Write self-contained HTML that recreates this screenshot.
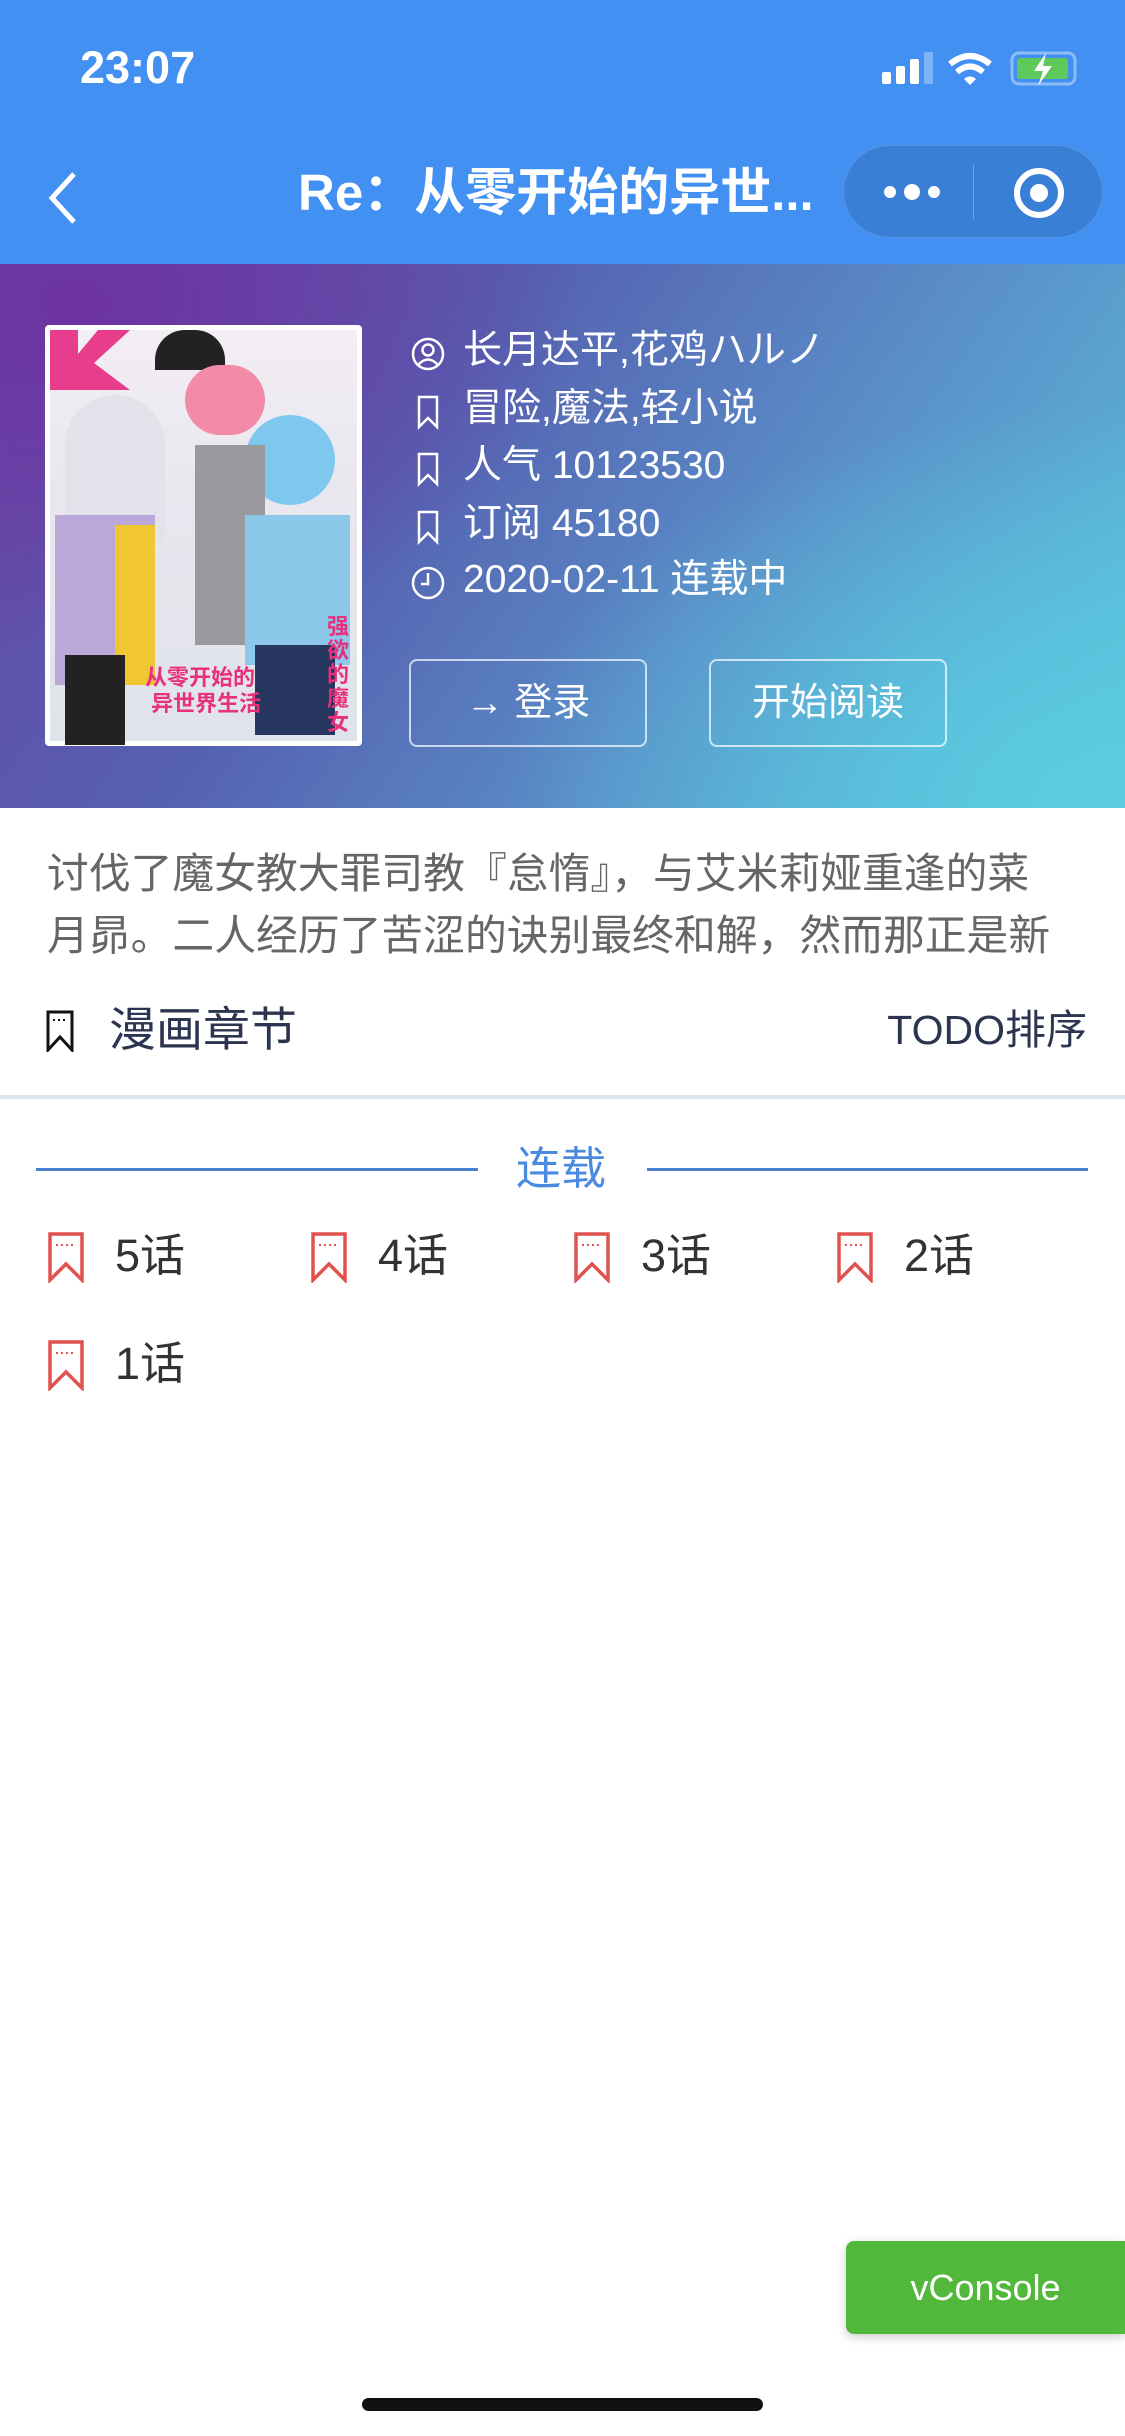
<!DOCTYPE html>
<html><head><meta charset="utf-8"><style>
*{margin:0;padding:0;box-sizing:border-box}
body{width:1125px;height:2436px;background:#fff;position:relative;overflow:hidden;font-family:"Liberation Sans","Noto Sans CJK SC",sans-serif}
.abs{position:absolute}
.hdr{left:0;top:0;width:1125px;height:264px;background:#4290f2}
.grad{left:0;top:264px;width:1125px;height:544px;background:
radial-gradient(ellipse 500px 350px at 80px 40px,rgba(110,50,160,.95),rgba(110,50,160,0) 100%),
radial-gradient(ellipse 600px 400px at 1100px 540px,rgba(90,205,225,1),rgba(90,205,225,0) 100%),
linear-gradient(125deg,#6a44a6 0%,#5560b0 35%,#5a8ec8 65%,#5cc4dc 100%)}
.info{left:410px;color:#fff;font-size:39px;line-height:46px;white-space:nowrap}
.info svg{position:absolute;left:0;top:8px}
.info span{position:absolute;left:53px;top:0}
.btn{top:659px;height:88px;width:238px;border:2px solid rgba(255,255,255,.7);border-radius:8px;color:#fff;font-size:38px;text-align:center;line-height:84px}
.ch{font-size:45px;color:#333;line-height:56px;white-space:nowrap}
.ch svg{position:absolute;left:0;top:3px}
.ch span{position:absolute;left:68px;top:0}
</style></head><body>
<div class="abs hdr"></div>
<div class="abs" style="left:80px;top:42px;color:#fff;font-size:45px;font-weight:bold;line-height:52px">23:07</div>
<svg class="abs" style="left:880px;top:50px" width="200" height="40" viewBox="0 0 200 40">
<rect x="2" y="22" width="9" height="12" rx="2" fill="#fff"/><rect x="16" y="16" width="9" height="18" rx="2" fill="#fff"/><rect x="30" y="9" width="9" height="25" rx="2" fill="#fff"/><rect x="44" y="2" width="9" height="32" rx="2" fill="#7fb4f6"/>
<path d="M70 14 Q90 -2 110 14" stroke="#fff" stroke-width="6" fill="none"/><path d="M77 22 Q90 11 103 22" stroke="#fff" stroke-width="6" fill="none"/><path d="M84 29 L90 35 L96 29 Q90 24 84 29Z" fill="#fff"/>
<rect x="132" y="3" width="63" height="31" rx="7" fill="none" stroke="#8dbdf5" stroke-width="3"/><rect x="137" y="8" width="51" height="21" rx="3" fill="#5ec85a"/><path d="M166 3 L154 21 L163 21 L158 36 L172 16 L163 16 Z" fill="#fff"/>
</svg>
<svg class="abs" style="left:44px;top:170px" width="40" height="56" viewBox="0 0 40 56"><path d="M30 4 L8 28 L30 52" stroke="#fff" stroke-width="5" fill="none"/></svg>
<div class="abs" style="left:298px;top:163px;color:#fff;font-size:51px;font-weight:bold;line-height:60px;white-space:nowrap">Re：从零开始的异世...</div>
<div class="abs" style="left:843px;top:145px;width:260px;height:93px;border-radius:47px;background:#3a7fd6;border:1px solid #5495e6"></div>
<div class="abs" style="left:973px;top:164px;width:1px;height:56px;background:#6aa1e6"></div>
<svg class="abs" style="left:880px;top:175px" width="70" height="34"><circle cx="10" cy="17" r="6" fill="#fff"/><circle cx="32" cy="17" r="8" fill="#fff"/><circle cx="54" cy="17" r="6" fill="#fff"/></svg>
<svg class="abs" style="left:1012px;top:166px" width="54" height="54"><circle cx="27" cy="27" r="22" stroke="#fff" stroke-width="6" fill="none"/><circle cx="27" cy="27" r="9" fill="#fff"/></svg>

<div class="abs grad"></div>
<div class="abs" style="left:45px;top:325px;width:317px;height:421px;background:#fff;border-radius:4px;overflow:hidden">
<div class="abs" style="left:5px;top:5px;width:307px;height:411px;background:linear-gradient(180deg,#f3eef4 0%,#e9e6ee 40%,#dfe3ea 100%)"></div>
<div class="abs" style="left:5px;top:5px;width:80px;height:60px;background:#e83c8c;clip-path:polygon(0 0,35% 0,35% 40%,60% 0,100% 0,55% 55%,100% 100%,0 100%)"></div>
<div class="abs" style="left:110px;top:5px;width:70px;height:40px;background:#222;border-radius:30px 30px 0 0"></div>
<div class="abs" style="left:140px;top:40px;width:80px;height:70px;background:#f28aa8;border-radius:40px"></div>
<div class="abs" style="left:200px;top:90px;width:90px;height:90px;background:#7ec8ee;border-radius:45px"></div>
<div class="abs" style="left:20px;top:70px;width:100px;height:150px;background:#e2e2ea;border-radius:50px 50px 10px 10px"></div>
<div class="abs" style="left:10px;top:190px;width:100px;height:170px;background:#b9a8d8"></div>
<div class="abs" style="left:70px;top:200px;width:40px;height:160px;background:#f0c632"></div>
<div class="abs" style="left:150px;top:120px;width:70px;height:200px;background:#9a9a9e"></div>
<div class="abs" style="left:200px;top:190px;width:105px;height:150px;background:#8cc8ea"></div>
<div class="abs" style="left:210px;top:320px;width:80px;height:90px;background:#26365e"></div>
<div class="abs" style="left:20px;top:330px;width:60px;height:90px;background:#222"></div>
<div class="abs" style="left:100px;top:340px;width:120px;height:60px;color:#e8307c;font-size:22px;font-weight:bold;line-height:26px;white-space:nowrap">从零开始的<br>&nbsp;异世界生活</div>
<div class="abs" style="left:282px;top:290px;width:26px;color:#e8307c;font-size:22px;font-weight:bold;line-height:24px">强欲的魔女</div>
</div>

<div class="abs info" style="top:328px"><svg width="36" height="36" viewBox="0 0 36 36"><circle cx="18" cy="18" r="15" stroke="#fff" stroke-width="2.5" fill="none"/><circle cx="18" cy="14" r="5.5" stroke="#fff" stroke-width="2.5" fill="none"/><path d="M8 29 Q18 18 28 29" stroke="#fff" stroke-width="2.5" fill="none"/></svg><span>长月达平,花鸡ハルノ</span></div>
<div class="abs info" style="top:386px"><svg width="36" height="36" viewBox="0 0 36 36"><path d="M9 3 H27 V33 L18 24 L9 33 Z" stroke="#fff" stroke-width="2.5" fill="none"/></svg><span>冒险,魔法,轻小说</span></div>
<div class="abs info" style="top:443px"><svg width="36" height="36" viewBox="0 0 36 36"><path d="M9 3 H27 V33 L18 24 L9 33 Z" stroke="#fff" stroke-width="2.5" fill="none"/></svg><span>人气 10123530</span></div>
<div class="abs info" style="top:501px"><svg width="36" height="36" viewBox="0 0 36 36"><path d="M9 3 H27 V33 L18 24 L9 33 Z" stroke="#fff" stroke-width="2.5" fill="none"/></svg><span>订阅 45180</span></div>
<div class="abs info" style="top:557px"><svg width="36" height="36" viewBox="0 0 36 36"><circle cx="18" cy="18" r="15" stroke="#fff" stroke-width="2.5" fill="none"/><path d="M18 8 V19 H11" stroke="#fff" stroke-width="2.5" fill="none"/></svg><span>2020-02-11 连载中</span></div>
<div class="abs btn" style="left:409px">→ 登录</div>
<div class="abs btn" style="left:709px">开始阅读</div>

<div class="abs" style="left:47px;top:843px;width:1020px;color:#666;font-size:41.8px;line-height:62px;height:124px;overflow:hidden">讨伐了魔女教大罪司教『怠惰』，与艾米莉娅重逢的菜月昴。二人经历了苦涩的诀别最终和解，然而那正是新的开始</div>

<svg class="abs" style="left:45px;top:1010px" width="30" height="42" viewBox="0 0 30 42"><path d="M3 2 H27 V40 L15 27 L3 40 Z" stroke="#111" stroke-width="3" fill="none"/><path d="M8 10 H22" stroke="#111" stroke-width="2" stroke-dasharray="2 3"/></svg>
<div class="abs" style="left:109px;top:1002px;font-size:47px;color:#2c3550;line-height:56px">漫画章节</div>
<div class="abs" style="right:38px;top:1005px;font-size:41px;color:#2c3550;line-height:50px">TODO排序</div>
<div class="abs" style="left:0;top:1095px;width:1125px;height:4px;background:#d9e4ef"></div>

<div class="abs" style="left:36px;top:1168px;width:442px;height:3px;background:#4a80d0"></div>
<div class="abs" style="left:647px;top:1168px;width:441px;height:3px;background:#4a80d0"></div>
<div class="abs" style="left:516px;top:1142px;font-size:45px;color:#4a8ae0;line-height:54px">连载</div>

<div class="abs ch" style="left:47px;top:1228px"><svg width="38" height="52" viewBox="0 0 38 52"><path d="M3 3 H35 V49 L19 33 L3 49 Z" stroke="#e0524e" stroke-width="3.5" fill="none"/><path d="M9 14 H29" stroke="#e0524e" stroke-width="2" stroke-dasharray="2 3"/></svg><span>5话</span></div>
<div class="abs ch" style="left:310px;top:1228px"><svg width="38" height="52" viewBox="0 0 38 52"><path d="M3 3 H35 V49 L19 33 L3 49 Z" stroke="#e0524e" stroke-width="3.5" fill="none"/><path d="M9 14 H29" stroke="#e0524e" stroke-width="2" stroke-dasharray="2 3"/></svg><span>4话</span></div>
<div class="abs ch" style="left:573px;top:1228px"><svg width="38" height="52" viewBox="0 0 38 52"><path d="M3 3 H35 V49 L19 33 L3 49 Z" stroke="#e0524e" stroke-width="3.5" fill="none"/><path d="M9 14 H29" stroke="#e0524e" stroke-width="2" stroke-dasharray="2 3"/></svg><span>3话</span></div>
<div class="abs ch" style="left:836px;top:1228px"><svg width="38" height="52" viewBox="0 0 38 52"><path d="M3 3 H35 V49 L19 33 L3 49 Z" stroke="#e0524e" stroke-width="3.5" fill="none"/><path d="M9 14 H29" stroke="#e0524e" stroke-width="2" stroke-dasharray="2 3"/></svg><span>2话</span></div>
<div class="abs ch" style="left:47px;top:1336px"><svg width="38" height="52" viewBox="0 0 38 52"><path d="M3 3 H35 V49 L19 33 L3 49 Z" stroke="#e0524e" stroke-width="3.5" fill="none"/><path d="M9 14 H29" stroke="#e0524e" stroke-width="2" stroke-dasharray="2 3"/></svg><span>1话</span></div>

<div class="abs" style="left:846px;top:2241px;width:279px;height:93px;background:#52b83c;border-radius:8px 0 0 8px;box-shadow:0 3px 10px rgba(0,0,0,.2);color:#fff;font-size:36px;text-align:center;line-height:93px">vConsole</div>
<div class="abs" style="left:362px;top:2398px;width:401px;height:13px;border-radius:7px;background:#111"></div>
</body></html>
